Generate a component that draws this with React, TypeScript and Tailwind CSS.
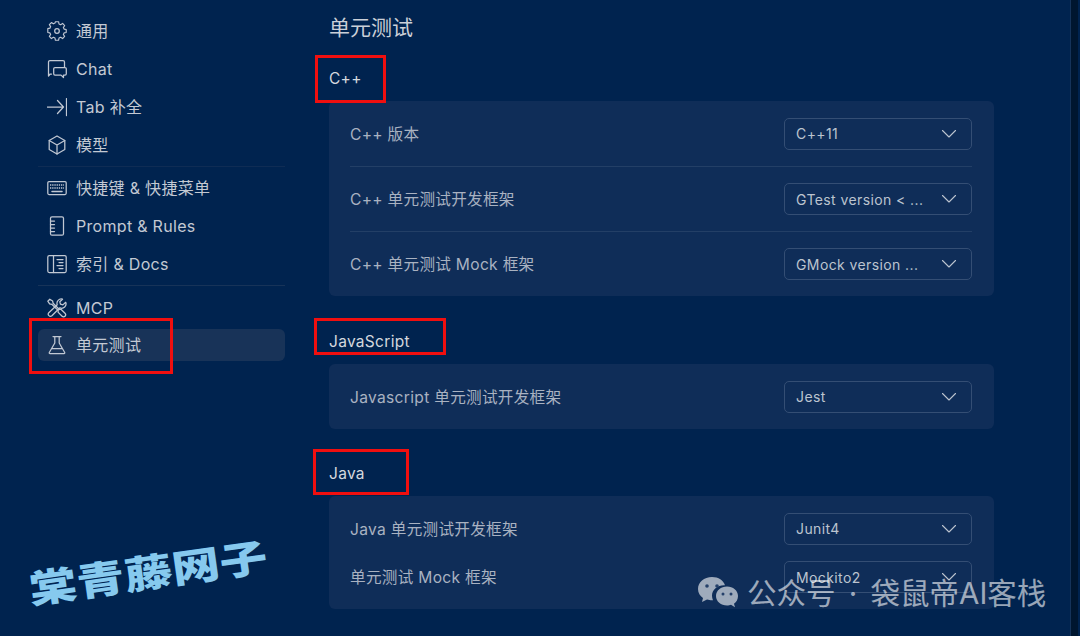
import React from "react";

const S = (p: { children: React.ReactNode }) => (
  <svg width="20" height="20" viewBox="0 0 20 20" fill="none" stroke="currentColor" strokeWidth="1.25" strokeLinecap="round" strokeLinejoin="round">{p.children}</svg>
);

const Gear = () => (
  <S>
    <circle cx="10" cy="10" r="2.300" />
    <path d="M8.300 .9h3.400l.5 2.500 1.700.8 2.200-1.400 2.200 2.300-1.400 2.100.8 1.700 2.300.5v3.200l-2.300.5-.8 1.700 1.400 2.100-2.200 2.300-2.200-1.400-1.700.8-.5 2.500H8.300l-.5-2.500-1.700-.8-2.200 1.400-2.200-2.300 1.400-2.100-.8-1.700-2.300-.5V8.400l2.300-.5.8-1.700-1.400-2.100 2.200-2.300 2.200 1.400 1.700-.8z" transform="translate(10 10) scale(.92) translate(-10 -11)" />
  </S>
);
const ChatI = () => (
  <S>
    <path d="M4.500 15H3.200L1.500 17V3A1.500 1.500 0 0 1 3 1.500h13A1.500 1.500 0 0 1 17.500 3v5" />
    <path d="M8 8.500h10a1.300 1.300 0 0 1 1.300 1.300v5a1.300 1.300 0 0 1-1.300 1.300h-1.500v2.400l-2.500-2.400H8A1.300 1.300 0 0 1 6.700 14.800v-5A1.300 1.300 0 0 1 8 8.500z" />
  </S>
);
const TabI = () => (
  <S>
    <path d="M.5 10h15.500M10.500 3.500l6 6.500-6 6.500M19.500 1.500v17" />
  </S>
);
const Cube = () => (
  <S>
    <path d="M10 1l7.800 4.500v9L10 19l-7.800-4.500v-9z" />
    <path d="M2.200 5.500L10 10l7.800-4.500M10 10v9" />
  </S>
);
const Keyboard = () => (
  <S>
    <rect x=".8" y="3.500" width="18.400" height="13" rx="1.200" />
    <path strokeDasharray="1.300 .9" strokeLinecap="butt" strokeWidth="1.500" d="M3 7h14M3 10h14" />
    <path d="M5 13.500h10" strokeWidth="1.500" />
  </S>
);
const Book = () => (
  <S>
    <rect x="3.500" y=".8" width="13" height="18.400" rx="1.500" />
    <path d="M3.500 5h4M3.500 8.500h4M3.500 12h4M3.500 15.500h4" />
  </S>
);
const Docs = () => (
  <S>
    <rect x=".8" y="1.500" width="18.400" height="17" rx="1.500" />
    <path d="M6.500 1.500v17M10 5.500h6M12 8.500h4M10 11.500h6M12 14.500h4" />
  </S>
);
const Tools = () => (
  <S>
    <path d="M2.800 1.200l2.800 1.800.5 2.200 6.300 6.300 1.500-.3 4.100 4.100a2 2 0 0 1-2.900 2.900l-4.100-4.100.3-1.500L4.800 6.300l-2.200-.5L.8 3.100z" />
    <path d="M18.700 4.300l-2.800 2.600-2.400-.7-.7-2.400 2.700-2.600a4.300 4.300 0 0 0-5.300 5.500L1.800 14.700a2.200 2.200 0 0 0 3.100 3.100l8-8a4.300 4.300 0 0 0 5.800-5.500z" />
  </S>
);
const Flask = () => (
  <S>
    <path d="M6 1.500h8M7.800 1.500v6.500L2.300 17.500a.8.800 0 0 0 .7 1.200h14a.8.800 0 0 0 .7-1.200L12.200 8V1.500M5 13.500h10" />
  </S>
);

const Item = ({ icon, label, active }: { icon: React.ReactNode; label: string; active?: boolean }) => (
  <div className={`flex h-[32px] items-center gap-[9px] rounded-[6px] pl-[9px] ${active ? "bg-[#183358]" : ""}`}>
    <span className="text-[#c1c8d3]">{icon}</span>
    <span className="text-[16px] tracking-[0.3px] text-[#c3c9d3]">{label}</span>
  </div>
);

const Select = ({ value }: { value: string }) => (
  <div className="flex h-[32px] w-[188px] shrink-0 items-center justify-between rounded-[5px] border border-[#344e74] pl-[11px] pr-[14px] text-[14px] tracking-[0.4px] text-[#bcc4cf]">
    <span>{value}</span>
    <svg width="16" height="16" viewBox="0 0 16 16" fill="none" stroke="currentColor" strokeWidth="1.100" strokeLinecap="round" strokeLinejoin="round">
      <path d="M1.500 4.500L8 11l6.500-6.500" />
    </svg>
  </div>
);

const Row = ({ label, value, className }: { label: string; value: string; className: string }) => (
  <div className={`flex items-center justify-between ${className}`}>
    <span className="pt-[2px] text-[15.6px] tracking-[0.3px] text-[#a9b2c1]">{label}</span>
    <Select value={value} />
  </div>
);

const Card = ({ children }: { children: React.ReactNode }) => (
  <div className="rounded-[6px] bg-[#0f2d58] pl-[21px] pr-[22px]">{children}</div>
);

const Heading = ({ children, className }: { children: React.ReactNode; className: string }) => (
  <h2 className={`text-[15.5px] leading-[22px] tracking-[0.3px] text-[#d4d8de] ${className}`}>{children}</h2>
);

const Frame = ({ className }: { className: string }) => (
  <div className={`absolute border-[3px] border-[#f00f0f] ${className}`} />
);

export default function App() {
  return (
    <div
      className="relative flex h-[636px] w-[1080px] overflow-hidden bg-[#00234f]"
      style={{ fontFamily: "Inter, 'Noto Sans CJK SC', sans-serif" }}
    >
      <aside className="w-[285px] shrink-0 pl-[38px] pt-[15px]">
        <div className="flex flex-col gap-[6px]">
          <Item icon={<Gear />} label="通用" />
          <Item icon={<ChatI />} label="Chat" />
          <Item icon={<TabI />} label="Tab 补全" />
          <Item icon={<Cube />} label="模型" />
        </div>
        <div className="mb-[5px] mt-[5px] h-px bg-[#0f2c54]" />
        <div className="flex flex-col gap-[6px]">
          <Item icon={<Keyboard />} label="快捷键 & 快捷菜单" />
          <Item icon={<Book />} label="Prompt & Rules" />
          <Item icon={<Docs />} label="索引 & Docs" />
        </div>
        <div className="mb-[6px] mt-[5px] h-px bg-[#173358]" />
        <div className="flex flex-col gap-[5px]">
          <Item icon={<Tools />} label="MCP" />
          <Item icon={<Flask />} label="单元测试" active />
        </div>
      </aside>
      <main className="ml-[44px] w-[665px] shrink-0">
        <h1 className="mt-[14px] text-[21px] leading-[28px] text-[#cbd0d8]">单元测试</h1>
        <Heading className="mt-[26px] h-[33px]">C++</Heading>
        <Card>
          <Row label="C++ 版本" value="C++11" className="h-[66px] border-b border-[#233f66]" />
          <Row label="C++ 单元测试开发框架" value="GTest version < ..." className="h-[65px] border-b border-[#233f66]" />
          <Row label="C++ 单元测试 Mock 框架" value="GMock version ..." className="h-[64px]" />
        </Card>
        <Heading className="mt-[35px] h-[33px]">JavaScript</Heading>
        <Card>
          <Row label="Javascript 单元测试开发框架" value="Jest" className="h-[65px]" />
        </Card>
        <Heading className="mt-[34px] h-[33px]">Java</Heading>
        <Card>
          <Row label="Java 单元测试开发框架" value="Junit4" className="h-[65px]" />
          <Row label="单元测试 Mock 框架" value="Mockito2" className="h-[48px] pb-[16px]" />
        </Card>
      </main>
      <div className="ml-auto mr-[2px] w-[8px] border-l border-[#153359] bg-[#00162f]" />

      <Frame className="left-[29px] top-[318px] h-[56px] w-[144px]" />
      <Frame className="left-[315px] top-[55px] h-[48px] w-[71px]" />
      <Frame className="left-[314px] top-[318px] h-[37px] w-[132px]" />
      <Frame className="left-[313px] top-[449px] h-[46px] w-[96px]" />

      <div className="absolute left-[29px] top-[561px] origin-left -rotate-[8deg] scale-y-[0.8] whitespace-nowrap text-[48px] font-black leading-[52px] text-[#86c9ee]" style={{ fontFamily: "'Noto Sans CJK SC', sans-serif" }}>
        棠青藤网子
      </div>

      <div className="absolute left-[697px] top-[575px] flex items-center gap-[8px] text-white/60">
        <svg width="42" height="34" viewBox="0 0 42 34" fill="currentColor">
          <path d="M15 1C7 1 1 6 1 13c0 4 2 7 5 9l-1 4 5-2.500c2 .5 3 .7 5 .7h1c-.6-1.500-1-3-1-4.500 0-6 5.500-10.500 12-10.500h1C26.500 4.500 21.500 1 15 1z" />
          <path d="M41 20c0-5.500-5-9.500-11-9.500S19 14.500 19 20s5 9.500 11 9.500c1.500 0 3-.2 4-.7l4 2.500-1-3.500c2.500-1.800 4-4.500 4-7.800z" />
          <circle cx="10" cy="10" r="1.800" fill="#25406a" />
          <circle cx="20" cy="10" r="1.800" fill="#25406a" />
          <circle cx="26" cy="18" r="1.500" fill="#25406a" />
          <circle cx="34" cy="18" r="1.500" fill="#25406a" />
        </svg>
        <span className="whitespace-nowrap text-[29.5px] leading-[36px] [word-spacing:5px]">公众号 · 袋鼠帝AI客栈</span>
      </div>
    </div>
  );
}
